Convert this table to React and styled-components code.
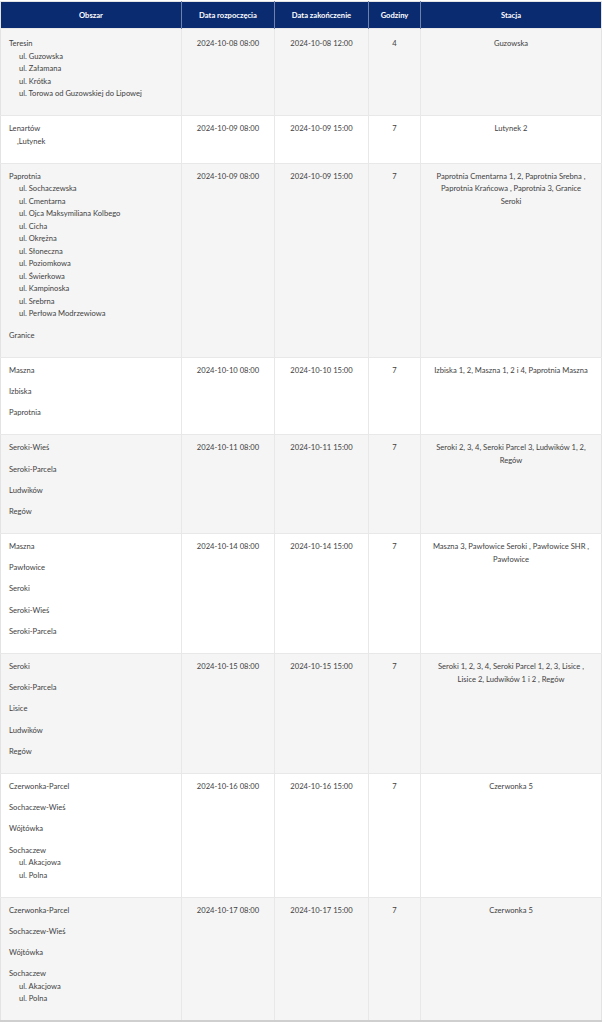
import React from "react";
import styled, { createGlobalStyle } from "styled-components";

const Global = createGlobalStyle`
  html, body { margin: 0; padding: 0; background: #ffffff; }
  body { font-family: Lato, "Open Sans", sans-serif; }
`;

const Page = styled.div`
  padding-top: 1px;
  width: 602px;
`;

const Table = styled.table`
  width: 601px;
  table-layout: fixed;
  border-collapse: collapse;
  border: 1px solid #e3e3e3;
  border-bottom: 2px solid #cfcfcf;
  font-size: 7.6px;
  line-height: 12.5px;
  color: #3f3f3f;
`;

const HeadCell = styled.th`
  background: #0b2b70;
  color: #ffffff;
  font-weight: 700;
  font-size: 7.6px;
  height: 26px;
  padding: 0 6px;
  text-align: center;
  vertical-align: middle;
  border-left: 1px solid #6f82ad;
  &:first-child { border-left: none; }
`;

const Row = styled.tr`
  background: ${(p) => (p.$shaded ? "#f5f5f5" : "#ffffff")};
  border-top: 1px solid #e8e8e8;
`;

const Cell = styled.td`
  vertical-align: top;
  text-align: ${(p) => p.$align || "center"};
  padding: 6px ${(p) => p.$px || 8}px 7px;
  border-left: 1px solid #e8e8e8;
  &:first-child { border-left: none; }
  tr:first-child > & { padding-top: 8px; }
`;

const Block = styled.p`
  margin: 0 0 8.7px;
`;

const Street = styled.span`
  display: block;
  padding-left: ${(p) => p.$indent ?? 10}px;
`;

const rows = [
  {
    area: [
      {
        name: "Teresin",
        streets: ["ul. Guzowska", "ul. Załamana", "ul. Krótka", "ul. Torowa od Guzowskiej do Lipowej"],
      },
    ],
    start: "2024-10-08 08:00",
    end: "2024-10-08 12:00",
    hours: "4",
    station: "Guzowska",
  },
  {
    area: [{ name: "Lenartów", streets: [",Lutynek"], indent: 8 }],
    start: "2024-10-09 08:00",
    end: "2024-10-09 15:00",
    hours: "7",
    station: "Lutynek 2",
  },
  {
    area: [
      {
        name: "Paprotnia",
        streets: [
          "ul. Sochaczewska",
          "ul. Cmentarna",
          "ul. Ojca Maksymiliana Kolbego",
          "ul. Cicha",
          "ul. Okrężna",
          "ul. Słoneczna",
          "ul. Poziomkowa",
          "ul. Świerkowa",
          "ul. Kampinoska",
          "ul. Srebrna",
          "ul. Perłowa Modrzewiowa",
        ],
      },
      { name: "Granice" },
    ],
    start: "2024-10-09 08:00",
    end: "2024-10-09 15:00",
    hours: "7",
    station: "Paprotnia Cmentarna 1, 2, Paprotnia Srebna , Paprotnia Krańcowa , Paprotnia 3, Granice Seroki",
  },
  {
    area: [{ name: "Maszna" }, { name: "Izbiska" }, { name: "Paprotnia" }],
    start: "2024-10-10 08:00",
    end: "2024-10-10 15:00",
    hours: "7",
    station: "Izbiska 1, 2, Maszna 1, 2 i 4, Paprotnia Maszna",
  },
  {
    area: [{ name: "Seroki-Wieś" }, { name: "Seroki-Parcela" }, { name: "Ludwików" }, { name: "Regów" }],
    start: "2024-10-11 08:00",
    end: "2024-10-11 15:00",
    hours: "7",
    station: "Seroki 2, 3, 4, Seroki Parcel 3, Ludwików 1, 2, Regów",
  },
  {
    area: [
      { name: "Maszna" },
      { name: "Pawłowice" },
      { name: "Seroki" },
      { name: "Seroki-Wieś" },
      { name: "Seroki-Parcela" },
    ],
    start: "2024-10-14 08:00",
    end: "2024-10-14 15:00",
    hours: "7",
    station: "Maszna 3, Pawłowice Seroki , Pawłowice SHR , Pawłowice",
  },
  {
    area: [
      { name: "Seroki" },
      { name: "Seroki-Parcela" },
      { name: "Lisice" },
      { name: "Ludwików" },
      { name: "Regów" },
    ],
    start: "2024-10-15 08:00",
    end: "2024-10-15 15:00",
    hours: "7",
    station: "Seroki 1, 2, 3, 4, Seroki Parcel 1, 2, 3, Lisice , Lisice 2, Ludwików 1 i 2 , Regów",
  },
  {
    area: [
      { name: "Czerwonka-Parcel" },
      { name: "Sochaczew-Wieś" },
      { name: "Wójtówka" },
      { name: "Sochaczew", streets: ["ul. Akacjowa", "ul. Polna"] },
    ],
    start: "2024-10-16 08:00",
    end: "2024-10-16 15:00",
    hours: "7",
    station: "Czerwonka 5",
  },
  {
    area: [
      { name: "Czerwonka-Parcel" },
      { name: "Sochaczew-Wieś" },
      { name: "Wójtówka" },
      { name: "Sochaczew", streets: ["ul. Akacjowa", "ul. Polna"] },
    ],
    start: "2024-10-17 08:00",
    end: "2024-10-17 15:00",
    hours: "7",
    station: "Czerwonka 5",
  },
];

export default function App() {
  return (
    <Page>
      <Global />
      <Table>
        <colgroup>
          <col style={{ width: 181 }} />
          <col style={{ width: 93 }} />
          <col style={{ width: 94 }} />
          <col style={{ width: 52 }} />
          <col style={{ width: 181 }} />
        </colgroup>
        <thead>
          <tr>
            <HeadCell>Obszar</HeadCell>
            <HeadCell>Data rozpoczęcia</HeadCell>
            <HeadCell>Data zakończenie</HeadCell>
            <HeadCell>Godziny</HeadCell>
            <HeadCell>Stacja</HeadCell>
          </tr>
        </thead>
        <tbody>
          {rows.map((r, i) => (
            <Row key={i} $shaded={i % 2 === 0}>
              <Cell $align="left">
                {r.area.map((b, j) => (
                  <Block key={j}>
                    {b.name}
                    {(b.streets || []).map((s) => (
                      <Street key={s} $indent={b.indent}>
                        {s}
                      </Street>
                    ))}
                  </Block>
                ))}
              </Cell>
              <Cell>{r.start}</Cell>
              <Cell>{r.end}</Cell>
              <Cell>{r.hours}</Cell>
              <Cell $px={10.5}>{r.station}</Cell>
            </Row>
          ))}
        </tbody>
      </Table>
    </Page>
  );
}
